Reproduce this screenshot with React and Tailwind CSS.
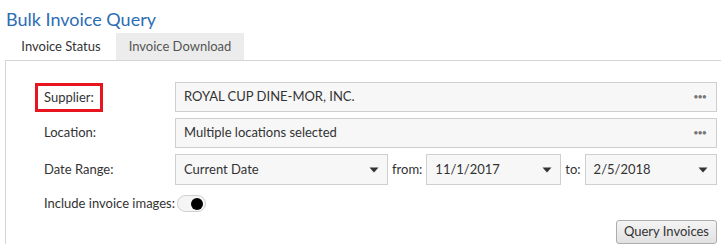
import { useState } from "react";

function Field({ children, dots }) {
    return (
        <div className="flex h-[30px] items-center justify-between border border-[#cfcfcf] bg-[#f7f7f7] pl-[8px] pr-[10px] text-[13px] text-[#333]">
            <span>{children}</span>
            {dots && <span className="text-[9px] tracking-[-1px] text-[#777]">•••</span>}
        </div>
    );
}

function Select({ value, className }) {
    return (
        <div className={`flex h-[31px] items-center justify-between border border-[#cfcfcf] bg-[#f7f7f7] pl-[8px] pr-[8px] text-[13px] text-[#333] ${className}`}>
            <span>{value}</span>
            <svg width="10" height="6" viewBox="0 0 10 6">
                <path d="M0.5 0.5 H9.5 L5 5.5 Z" fill="#333" />
            </svg>
        </div>
    );
}

export default function App() {
    const [images, setImages] = useState(true);

    return (
        <div className="h-[247px] w-[721px] overflow-hidden bg-white font-['Lato',sans-serif] text-[#333]">
            <h1 className="pl-[6px] pt-[7px] text-[18px] leading-[24px] text-[#2a6db5]">Bulk Invoice Query</h1>

            <div className="mt-[2px] flex pl-[6px] text-[13px]">
                <div className="flex h-[27px] w-[110px] items-center justify-center text-[#333]">Invoice Status</div>
                <div className="flex h-[27px] w-[128px] items-center justify-center bg-[#ececec] text-[#555]">Invoice Download</div>
            </div>

            <div className="ml-[5px] -mr-[20px] border-l border-t border-[#d4d4d4] pl-[38px] pr-[24px] pt-[21px] text-[13px]">
                <div className="grid grid-cols-[131px_1fr] items-center gap-y-[6px]">
                    <div>
                        <span className="-ml-[9px] inline-block h-[29px] border-[3px] border-[#e8141e] px-[6px] leading-[23px]">Supplier:</span>
                    </div>
                    <Field dots>ROYAL CUP DINE-MOR, INC.</Field>

                    <div>Location:</div>
                    <Field dots>Multiple locations selected</Field>

                    <div>Date Range:</div>
                    <div className="flex items-center">
                        <Select value="Current Date" className="w-[213px]" />
                        <span className="mx-[4px]">from:</span>
                        <Select value="11/1/2017" className="w-[135px]" />
                        <span className="mx-[4px]">to:</span>
                        <Select value="2/5/2018" className="flex-1" />
                    </div>
                </div>

                <div className="mt-[9px] flex h-[19px] items-center">
                    <span className="whitespace-nowrap">Include invoice images:</span>
                    <button
                        onClick={() => setImages(!images)}
                        className={`ml-[2px] flex h-[17px] w-[29px] items-center rounded-full border border-[#cfcfcf] bg-[#f5f5f5] px-[2px] ${images ? "justify-end" : "justify-start"}`}
                    >
                        <span className="h-[12px] w-[12px] rounded-full bg-black" />
                    </button>
                </div>

                <div className="mt-[7px] flex justify-end">
                    <button className="h-[24px] rounded-[3px] border border-[#adadad] bg-gradient-to-b from-[#f4f4f4] to-[#e1e1e1] px-[7px] text-[13px] text-[#333]">
                        Query Invoices
                    </button>
                </div>
            </div>
        </div>
    );
}
